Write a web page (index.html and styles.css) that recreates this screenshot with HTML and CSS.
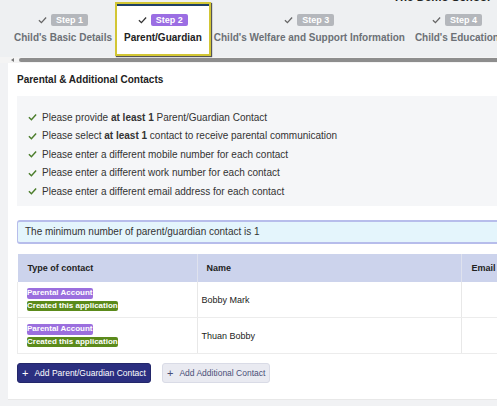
FILE: index.html
```html
<!DOCTYPE html>
<html>
<head>
<meta charset="utf-8">
<link rel="stylesheet" href="styles.css">
</head>
<body>
<div class="page">
  <header class="top">
    <div class="school">The Demo School</div>
    <nav class="steps">
      <div class="step">
        <div class="step-head"><svg class="tick" viewBox="0 0 10 8"><path d="M1 4.2 L3.8 7 L9 1.2"/></svg><span class="badge-step">Step 1</span></div>
        <div class="step-label">Child's Basic Details</div>
      </div>
      <div class="step active">
        <div class="step-head"><svg class="tick" viewBox="0 0 10 8"><path d="M1 4.2 L3.8 7 L9 1.2"/></svg><span class="badge-step">Step 2</span></div>
        <div class="step-label">Parent/Guardian</div>
      </div>
      <div class="step">
        <div class="step-head"><svg class="tick" viewBox="0 0 10 8"><path d="M1 4.2 L3.8 7 L9 1.2"/></svg><span class="badge-step">Step 3</span></div>
        <div class="step-label">Child's Welfare and Support Information</div>
      </div>
      <div class="step">
        <div class="step-head"><svg class="tick" viewBox="0 0 10 8"><path d="M1 4.2 L3.8 7 L9 1.2"/></svg><span class="badge-step">Step 4</span></div>
        <div class="step-label">Child's Education</div>
      </div>
    </nav>
    <div class="scrollbar"><span class="arrow"></span><span class="thumb"></span></div>
  </header>

  <main class="card">
    <h2 class="title">Parental &amp; Additional Contacts</h2>
    <ul class="rules">
      <li><svg class="ok" viewBox="0 0 10 8"><path d="M1 4.2 L3.8 7 L9 1.2"/></svg><span>Please provide <b>at least 1</b> Parent/Guardian Contact</span></li>
      <li><svg class="ok" viewBox="0 0 10 8"><path d="M1 4.2 L3.8 7 L9 1.2"/></svg><span>Please select <b>at least 1</b> contact to receive parental communication</span></li>
      <li><svg class="ok" viewBox="0 0 10 8"><path d="M1 4.2 L3.8 7 L9 1.2"/></svg><span>Please enter a different mobile number for each contact</span></li>
      <li><svg class="ok" viewBox="0 0 10 8"><path d="M1 4.2 L3.8 7 L9 1.2"/></svg><span>Please enter a different work number for each contact</span></li>
      <li><svg class="ok" viewBox="0 0 10 8"><path d="M1 4.2 L3.8 7 L9 1.2"/></svg><span>Please enter a different email address for each contact</span></li>
    </ul>

    <div class="alert">The minimum number of parent/guardian contact is 1</div>

    <table class="contacts">
      <thead>
        <tr><th class="c1">Type of contact</th><th class="c2">Name</th><th class="c3">Email</th></tr>
      </thead>
      <tbody>
        <tr>
          <td><span class="tag purple">Parental Account</span><span class="tag green">Created this application</span></td>
          <td>Bobby Mark</td>
          <td></td>
        </tr>
        <tr>
          <td><span class="tag purple">Parental Account</span><span class="tag green">Created this application</span></td>
          <td>Thuan Bobby</td>
          <td></td>
        </tr>
      </tbody>
    </table>

    <div class="actions">
      <button class="btn primary"><span class="plus">+</span>Add Parent/Guardian Contact</button>
      <button class="btn secondary"><span class="plus">+</span>Add Additional Contact</button>
    </div>
  </main>
</div>
</body>
</html>
```

FILE: styles.css
```css
html, body {
  margin: 0;
  padding: 0;
}
body {
  width: 497px;
  height: 406px;
  overflow: hidden;
  background: #f1f2f4;
  font-family: "Liberation Sans", Arial, sans-serif;
  color: #2a2a2a;
}
.page {
  width: 600px;
}
.top {
  background: #eef0f2;
  display: flex;
  flex-direction: column;
}
.school {
  margin-top: -8px;
  height: 10px;
  line-height: 10px;
  font-size: 11.5px;
  font-weight: bold;
  color: #222;
  padding-left: 393px;
}
.steps {
  display: flex;
  padding-left: 9px;
  height: 54px;
  box-sizing: border-box;
}
.step {
  display: flex;
  flex-direction: column;
  align-items: center;
  padding: 12px 5px 0;
  box-sizing: border-box;
}
.step-head {
  display: flex;
  align-items: center;
  gap: 4px;
  height: 12px;
}
.tick {
  width: 9px;
  height: 8px;
  fill: none;
  stroke: #666;
  stroke-width: 1.4;
}
.badge-step {
  display: inline-block;
  background: #b4b7bc;
  color: #fff;
  font-size: 9px;
  font-weight: bold;
  line-height: 12px;
  padding: 0 5px;
  border-radius: 2px;
}
.step-label {
  margin-top: 6px;
  font-size: 10px;
  font-weight: bold;
  color: #6c7076;
  white-space: nowrap;
}
.step.active {
  background: #fff;
  border: 2px solid #d2c634;
  box-shadow: 1px 1px 1px #555;
  padding: 10px 7px 0;
  margin: 0 -2px;
  position: relative;
  z-index: 1;
}
.step.active::before {
  content: "";
  position: absolute;
  left: 0;
  right: 0;
  top: 0;
  height: 2px;
  background: #1e3f66;
}
.step.active .badge-step {
  background: #9b6ee3;
}
.step.active .tick {
  stroke: #333;
}
.step.active .step-label {
  color: #222;
}
.scrollbar {
  margin-top: 1px;
  height: 6px;
  background: #f4f4f4;
  display: flex;
  align-items: center;
  padding-left: 11px;
  gap: 5px;
}
.arrow {
  width: 0;
  height: 0;
  border-top: 2px solid transparent;
  border-bottom: 2px solid transparent;
  border-right: 3px solid #777;
}
.thumb {
  flex: 1;
  height: 4px;
  background: #8d8d8d;
  border-radius: 2px;
}
.card {
  background: #fff;
  margin-left: 8px;
  padding: 11px 0 16px 9px;
  border-bottom: 1px solid #e8e8e8;
}
.title {
  margin: 0;
  font-size: 10px;
  font-weight: bold;
  color: #222;
  line-height: 12px;
}
.rules {
  list-style: none;
  margin: 10px 0 0;
  padding: 11.75px 0 5.75px 11px;
  background: #f5f6f8;
}
.rules li {
  display: flex;
  align-items: center;
  font-size: 10px;
  color: #333;
  height: 18.5px;
  white-space: pre;
}
.ok {
  width: 9px;
  height: 8px;
  fill: none;
  stroke: #4b7d2b;
  stroke-width: 1.6;
  margin-right: 5px;
  flex: none;
}
.alert {
  margin-top: 14px;
  background: #e4f5fc;
  border: 1px solid #b7bdeb;
  border-top-width: 2px;
  border-bottom-width: 2px;
  border-radius: 3px 0 0 3px;
  padding: 0 7px;
  height: 20px;
  line-height: 20px;
  font-size: 10px;
  color: #333;
}
.contacts {
  margin-top: 10px;
  border-collapse: collapse;
  width: 100%;
}
.contacts th {
  background: #ccd3ec;
  text-align: left;
  font-weight: bold;
  font-size: 9px;
  color: #222;
  height: 28px;
  padding: 0 10px;
  border-right: 1px solid #dfe2ee;
}
.contacts th.c1 { width: 159px; }
.contacts th.c2 { width: 244px; padding-left: 9px; }
.contacts td {
  height: 35px;
  padding: 0 4px 0 9px;
  border-right: 1px solid #e8e8e8;
  border-bottom: 1px solid #ececec;
  color: #222;
  font-size: 9px;
  vertical-align: middle;
}
.contacts td:first-child {
  border-left: 1px solid #ececec;
  padding-left: 9px;
}
.contacts td:nth-child(2) { padding-left: 4px; }
.tag {
  display: table;
  color: #fff;
  font-size: 8px;
  font-weight: bold;
  line-height: 10.5px;
  padding: 0 2px;
  border-radius: 2px;
  white-space: nowrap;
}
.tag.purple { background: #9b6fde; }
.tag.green { background: #5b8a1b; margin-top: 2px; }
.actions {
  display: flex;
  gap: 11px;
  margin-top: 9px;
}
.btn {
  font-family: "Liberation Sans", Arial, sans-serif;
  font-size: 8.5px;
  height: 20px;
  padding: 0 4px;
  border-radius: 3px;
  display: flex;
  align-items: center;
  cursor: pointer;
}
.plus {
  font-size: 11px;
  margin-right: 6px;
  line-height: 10px;
}
.btn.primary {
  background: #2b2f80;
  color: #fff;
  border: 1px solid #23276a;
}
.btn.secondary {
  background: #e9eaf1;
  color: #4a4f78;
  border: 1px solid #d9dbe6;
}
```
